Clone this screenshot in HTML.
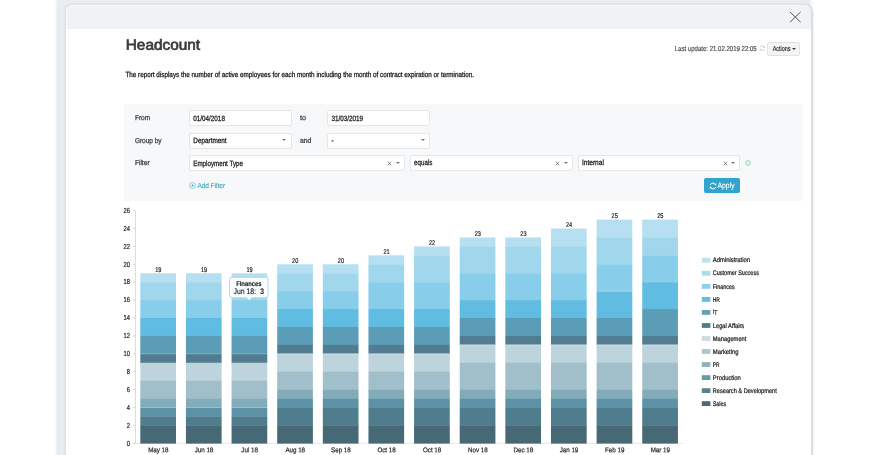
<!DOCTYPE html>
<html><head><meta charset="utf-8"><title>Headcount</title>
<style>
html,body{margin:0;padding:0;background:#fff;}
body{width:870px;height:455px;position:relative;overflow:hidden;font-family:"Liberation Sans",sans-serif;color:#222;}
.abs{position:absolute;white-space:nowrap;}
.modal{position:absolute;left:65.9px;top:4.7px;width:745.3px;height:470px;border-radius:6.5px;background:#fff;box-shadow:0 0 2.5px 0.5px #d9dde1,1.5px 0 1.5px 0 #d9dcde,-5px -14px 2.2px 5px #eaedef;overflow:hidden;}
.mhead{position:absolute;left:0;top:0;right:0;height:24.4px;background:#f0f3f6;box-shadow:inset 0.7px 0.7px 0 0 rgba(255,255,255,0.7);border-radius:6.5px 6.5px 0 0;}
.panel{position:absolute;left:123.5px;top:103.7px;width:679.7px;height:97.2px;background:#f6f8f9;}
.inp{position:absolute;border:1px solid #e4e7ea;border-radius:2px;background:#fff;box-sizing:content-box;}
.t{position:absolute;white-space:nowrap;line-height:1;transform-origin:0 50%;-webkit-text-stroke:0.3px currentColor;will-change:transform;}
.car{position:absolute;width:0;height:0;border-left:2px solid transparent;border-right:2px solid transparent;border-top:2.4px solid #777;}
</style></head><body>
<div class="modal"><div class="mhead"></div></div>
<svg class="abs" style="left:789px;top:11px" width="13" height="13" viewBox="0 0 13 13"><path d="M1 1L11.6 11.2M11.6 1L1 11.2" stroke="#555" stroke-width="1" fill="none"/></svg>
<svg class="abs" style="left:759.2px;top:44.7px" width="6.6" height="6.6" viewBox="0 0 8 8"><path d="M6.8 2.9A3 3 0 0 0 1.2 3.1M1.2 5.1A3 3 0 0 0 6.8 4.9" stroke="#9fd0bc" stroke-width="0.9" fill="none"/><path d="M7.6 1.4L6.9 3.6L4.9 2.6zM0.4 6.6L1.1 4.4L3.1 5.4z" fill="#9fd0bc"/></svg>
<div class="abs" style="left:767.3px;top:42px;width:31.2px;height:11.7px;border:1px solid #e0e3e5;border-radius:2px;background:#f3f4f5;"></div>
<div class="car" style="left:792.3px;top:48.2px;border-top-color:#333;"></div>
<div class="panel"></div>
<div class="inp" style="left:188.7px;top:110.4px;width:101.0px;height:13.9px;"></div>
<div class="inp" style="left:326.8px;top:110.4px;width:101.7px;height:13.9px;"></div>
<div class="inp" style="left:188.7px;top:132.9px;width:101.0px;height:14.1px;"></div>
<div class="inp" style="left:326.8px;top:132.9px;width:101.7px;height:14.1px;"></div>
<div class="car" style="left:281.9px;top:139.1px;border-top-color:#777;"></div>
<div class="car" style="left:420.8px;top:139.1px;border-top-color:#777;"></div>
<div class="inp" style="left:188.7px;top:155.3px;width:214.7px;height:14.1px;"></div>
<div class="inp" style="left:410.2px;top:155.3px;width:161.1px;height:14.1px;"></div>
<div class="inp" style="left:577.9px;top:155.3px;width:160.4px;height:14.1px;"></div>
<svg class="abs" style="left:387.2px;top:160.6px" width="5" height="5" viewBox="0 0 5 5"><path d="M0.8 0.8L4.2 4.2M4.2 0.8L0.8 4.2" stroke="#707070" stroke-width="0.8"/></svg><div class="car" style="left:395.6px;top:161.8px;border-top-color:#777;"></div>
<svg class="abs" style="left:555.2px;top:160.6px" width="5" height="5" viewBox="0 0 5 5"><path d="M0.8 0.8L4.2 4.2M4.2 0.8L0.8 4.2" stroke="#707070" stroke-width="0.8"/></svg><div class="car" style="left:563.8px;top:161.8px;border-top-color:#777;"></div>
<svg class="abs" style="left:722.5px;top:160.6px" width="5" height="5" viewBox="0 0 5 5"><path d="M0.8 0.8L4.2 4.2M4.2 0.8L0.8 4.2" stroke="#707070" stroke-width="0.8"/></svg><div class="car" style="left:731.2px;top:161.8px;border-top-color:#777;"></div>
<svg class="abs" style="left:745.3px;top:160px" width="6" height="6" viewBox="0 0 6 6"><circle cx="3" cy="3" r="2.4" fill="#dcf3ea" stroke="#93d2bb" stroke-width="0.9"/></svg>
<svg class="abs" style="left:188.7px;top:182.2px" width="7" height="7" viewBox="0 0 7 7"><circle cx="3.5" cy="3.5" r="2.9" fill="none" stroke="#4badc4" stroke-width="0.6"/><path d="M3.5 2v3M2 3.5h3" stroke="#4badc4" stroke-width="0.6"/></svg>
<div class="abs" style="left:703.6px;top:178.2px;width:36.6px;height:14.6px;border-radius:2px;background:#2fa4cd;"></div>
<svg class="abs" style="left:708.7px;top:181.5px" width="8" height="8" viewBox="0 0 8 8"><path d="M6.8 2.9A3 3 0 0 0 1.2 3.1M1.2 5.1A3 3 0 0 0 6.8 4.9" stroke="#fff" stroke-width="1.0" fill="none"/><path d="M7.6 1.4L6.9 3.6L4.9 2.6zM0.4 6.6L1.1 4.4L3.1 5.4z" fill="#fff"/></svg>
<svg width="870" height="455" viewBox="0 0 870 455" style="position:absolute;left:0;top:0;will-change:transform" stroke="#1e1e1e" stroke-width="0.12" font-family="'Liberation Sans', sans-serif">
<path d="M135.4 210.5V443.3" fill="none" stroke="#dcd9d9" stroke-width="1"/>
<path d="M133 443.3H684" fill="none" stroke="#e6e6e6" stroke-width="1"/>
<path d="M133 443.3H135.4" stroke="#cfcfcf" stroke-width="0.8"/>
<text transform="translate(130 445.6) rotate(0.03) scale(0.8 1)" font-size="7.2" stroke-width="0.22" text-anchor="end" fill="#1e1e1e">0</text>
<path d="M133 425.4H135.4" stroke="#cfcfcf" stroke-width="0.8"/>
<text transform="translate(130 427.7) rotate(0.03) scale(0.8 1)" font-size="7.2" stroke-width="0.22" text-anchor="end" fill="#1e1e1e">2</text>
<path d="M133 407.5H135.4" stroke="#cfcfcf" stroke-width="0.8"/>
<text transform="translate(130 409.8) rotate(0.03) scale(0.8 1)" font-size="7.2" stroke-width="0.22" text-anchor="end" fill="#1e1e1e">4</text>
<path d="M133 389.6H135.4" stroke="#cfcfcf" stroke-width="0.8"/>
<text transform="translate(130 391.9) rotate(0.03) scale(0.8 1)" font-size="7.2" stroke-width="0.22" text-anchor="end" fill="#1e1e1e">6</text>
<path d="M133 371.7H135.4" stroke="#cfcfcf" stroke-width="0.8"/>
<text transform="translate(130 374.0) rotate(0.03) scale(0.8 1)" font-size="7.2" stroke-width="0.22" text-anchor="end" fill="#1e1e1e">8</text>
<path d="M133 353.8H135.4" stroke="#cfcfcf" stroke-width="0.8"/>
<text transform="translate(130 356.1) rotate(0.03) scale(0.8 1)" font-size="7.2" stroke-width="0.22" text-anchor="end" fill="#1e1e1e">10</text>
<path d="M133 335.9H135.4" stroke="#cfcfcf" stroke-width="0.8"/>
<text transform="translate(130 338.2) rotate(0.03) scale(0.8 1)" font-size="7.2" stroke-width="0.22" text-anchor="end" fill="#1e1e1e">12</text>
<path d="M133 318.0H135.4" stroke="#cfcfcf" stroke-width="0.8"/>
<text transform="translate(130 320.3) rotate(0.03) scale(0.8 1)" font-size="7.2" stroke-width="0.22" text-anchor="end" fill="#1e1e1e">14</text>
<path d="M133 300.1H135.4" stroke="#cfcfcf" stroke-width="0.8"/>
<text transform="translate(130 302.4) rotate(0.03) scale(0.8 1)" font-size="7.2" stroke-width="0.22" text-anchor="end" fill="#1e1e1e">16</text>
<path d="M133 282.2H135.4" stroke="#cfcfcf" stroke-width="0.8"/>
<text transform="translate(130 284.5) rotate(0.03) scale(0.8 1)" font-size="7.2" stroke-width="0.22" text-anchor="end" fill="#1e1e1e">18</text>
<path d="M133 264.3H135.4" stroke="#cfcfcf" stroke-width="0.8"/>
<text transform="translate(130 266.6) rotate(0.03) scale(0.8 1)" font-size="7.2" stroke-width="0.22" text-anchor="end" fill="#1e1e1e">20</text>
<path d="M133 246.4H135.4" stroke="#cfcfcf" stroke-width="0.8"/>
<text transform="translate(130 248.7) rotate(0.03) scale(0.8 1)" font-size="7.2" stroke-width="0.22" text-anchor="end" fill="#1e1e1e">22</text>
<path d="M133 228.5H135.4" stroke="#cfcfcf" stroke-width="0.8"/>
<text transform="translate(130 230.8) rotate(0.03) scale(0.8 1)" font-size="7.2" stroke-width="0.22" text-anchor="end" fill="#1e1e1e">24</text>
<path d="M133 210.6H135.4" stroke="#cfcfcf" stroke-width="0.8"/>
<text transform="translate(130 212.9) rotate(0.03) scale(0.8 1)" font-size="7.2" stroke-width="0.22" text-anchor="end" fill="#1e1e1e">26</text>
<rect x="140.30" y="273.25" width="35.7" height="9.25" fill="#b6e0f1" stroke="none"/>
<rect x="140.30" y="282.20" width="35.7" height="18.20" fill="#a0d7ec" stroke="none"/>
<rect x="140.30" y="300.10" width="35.7" height="18.20" fill="#88cde9" stroke="none"/>
<rect x="140.30" y="318.00" width="35.7" height="18.20" fill="#61bce1" stroke="none"/>
<rect x="140.30" y="335.90" width="35.7" height="18.20" fill="#5b9db6" stroke="none"/>
<rect x="140.30" y="353.80" width="35.7" height="9.25" fill="#507d91" stroke="none"/>
<rect x="140.30" y="362.75" width="35.7" height="18.20" fill="#bed4dc" stroke="none"/>
<rect x="140.30" y="380.65" width="35.7" height="18.20" fill="#a0bfca" stroke="none"/>
<rect x="140.30" y="398.55" width="35.7" height="9.25" fill="#83acbb" stroke="none"/>
<rect x="140.30" y="407.50" width="35.7" height="9.25" fill="#5d92a6" stroke="none"/>
<rect x="140.30" y="416.45" width="35.7" height="9.25" fill="#4f7d8d" stroke="none"/>
<rect x="140.30" y="425.40" width="35.7" height="18.20" fill="#476976" stroke="none"/>
<rect x="140.30" y="353.35" width="35.7" height="0.9" fill="#fff" fill-opacity="0.3" stroke="none"/>
<rect x="140.30" y="407.05" width="35.7" height="0.9" fill="#fff" fill-opacity="0.3" stroke="none"/>
<text transform="translate(158.3 271.8) rotate(0.03) scale(0.8 1)" font-size="7" stroke-width="0.2" text-anchor="middle" fill="#1e1e1e">19</text>
<text transform="translate(158.3 452.3) rotate(0.03) scale(0.9 1)" font-size="6.9" stroke-width="0.2" text-anchor="middle" fill="#1e1e1e">May 18</text>
<rect x="185.93" y="273.25" width="35.7" height="9.25" fill="#b6e0f1" stroke="none"/>
<rect x="185.93" y="282.20" width="35.7" height="18.20" fill="#a0d7ec" stroke="none"/>
<rect x="185.93" y="300.10" width="35.7" height="18.20" fill="#88cde9" stroke="none"/>
<rect x="185.93" y="318.00" width="35.7" height="18.20" fill="#61bce1" stroke="none"/>
<rect x="185.93" y="335.90" width="35.7" height="18.20" fill="#5b9db6" stroke="none"/>
<rect x="185.93" y="353.80" width="35.7" height="9.25" fill="#507d91" stroke="none"/>
<rect x="185.93" y="362.75" width="35.7" height="18.20" fill="#bed4dc" stroke="none"/>
<rect x="185.93" y="380.65" width="35.7" height="18.20" fill="#a0bfca" stroke="none"/>
<rect x="185.93" y="398.55" width="35.7" height="9.25" fill="#83acbb" stroke="none"/>
<rect x="185.93" y="407.50" width="35.7" height="9.25" fill="#5d92a6" stroke="none"/>
<rect x="185.93" y="416.45" width="35.7" height="9.25" fill="#4f7d8d" stroke="none"/>
<rect x="185.93" y="425.40" width="35.7" height="18.20" fill="#476976" stroke="none"/>
<rect x="185.93" y="353.35" width="35.7" height="0.9" fill="#fff" fill-opacity="0.3" stroke="none"/>
<rect x="185.93" y="407.05" width="35.7" height="0.9" fill="#fff" fill-opacity="0.3" stroke="none"/>
<text transform="translate(204.0 271.8) rotate(0.03) scale(0.8 1)" font-size="7" stroke-width="0.2" text-anchor="middle" fill="#1e1e1e">19</text>
<text transform="translate(204.0 452.3) rotate(0.03) scale(0.9 1)" font-size="6.9" stroke-width="0.2" text-anchor="middle" fill="#1e1e1e">Jun 18</text>
<rect x="231.56" y="273.25" width="35.7" height="9.25" fill="#b6e0f1" stroke="none"/>
<rect x="231.56" y="282.20" width="35.7" height="18.20" fill="#a0d7ec" stroke="none"/>
<rect x="231.56" y="300.10" width="35.7" height="18.20" fill="#88cde9" stroke="none"/>
<rect x="231.56" y="318.00" width="35.7" height="18.20" fill="#61bce1" stroke="none"/>
<rect x="231.56" y="335.90" width="35.7" height="18.20" fill="#5b9db6" stroke="none"/>
<rect x="231.56" y="353.80" width="35.7" height="9.25" fill="#507d91" stroke="none"/>
<rect x="231.56" y="362.75" width="35.7" height="18.20" fill="#bed4dc" stroke="none"/>
<rect x="231.56" y="380.65" width="35.7" height="18.20" fill="#a0bfca" stroke="none"/>
<rect x="231.56" y="398.55" width="35.7" height="9.25" fill="#83acbb" stroke="none"/>
<rect x="231.56" y="407.50" width="35.7" height="9.25" fill="#5d92a6" stroke="none"/>
<rect x="231.56" y="416.45" width="35.7" height="9.25" fill="#4f7d8d" stroke="none"/>
<rect x="231.56" y="425.40" width="35.7" height="18.20" fill="#476976" stroke="none"/>
<rect x="231.56" y="353.35" width="35.7" height="0.9" fill="#fff" fill-opacity="0.3" stroke="none"/>
<rect x="231.56" y="407.05" width="35.7" height="0.9" fill="#fff" fill-opacity="0.3" stroke="none"/>
<text transform="translate(249.6 271.8) rotate(0.03) scale(0.8 1)" font-size="7" stroke-width="0.2" text-anchor="middle" fill="#1e1e1e">19</text>
<text transform="translate(249.6 452.3) rotate(0.03) scale(0.9 1)" font-size="6.9" stroke-width="0.2" text-anchor="middle" fill="#1e1e1e">Jul 18</text>
<rect x="277.19" y="264.30" width="35.7" height="9.25" fill="#b6e0f1" stroke="none"/>
<rect x="277.19" y="273.25" width="35.7" height="18.20" fill="#a0d7ec" stroke="none"/>
<rect x="277.19" y="291.15" width="35.7" height="18.20" fill="#88cde9" stroke="none"/>
<rect x="277.19" y="309.05" width="35.7" height="18.20" fill="#61bce1" stroke="none"/>
<rect x="277.19" y="326.95" width="35.7" height="18.20" fill="#5b9db6" stroke="none"/>
<rect x="277.19" y="344.85" width="35.7" height="9.25" fill="#507d91" stroke="none"/>
<rect x="277.19" y="353.80" width="35.7" height="18.20" fill="#bed4dc" stroke="none"/>
<rect x="277.19" y="371.70" width="35.7" height="18.20" fill="#a0bfca" stroke="none"/>
<rect x="277.19" y="389.60" width="35.7" height="9.25" fill="#83acbb" stroke="none"/>
<rect x="277.19" y="398.55" width="35.7" height="9.25" fill="#5d92a6" stroke="none"/>
<rect x="277.19" y="407.50" width="35.7" height="18.20" fill="#4f7d8d" stroke="none"/>
<rect x="277.19" y="425.40" width="35.7" height="18.20" fill="#476976" stroke="none"/>
<rect x="277.19" y="353.35" width="35.7" height="0.9" fill="#fff" fill-opacity="0.5" stroke="none"/>
<text transform="translate(295.2 262.8) rotate(0.03) scale(0.8 1)" font-size="7" stroke-width="0.2" text-anchor="middle" fill="#1e1e1e">20</text>
<text transform="translate(295.2 452.3) rotate(0.03) scale(0.9 1)" font-size="6.9" stroke-width="0.2" text-anchor="middle" fill="#1e1e1e">Aug 18</text>
<rect x="322.82" y="264.30" width="35.7" height="9.25" fill="#b6e0f1" stroke="none"/>
<rect x="322.82" y="273.25" width="35.7" height="18.20" fill="#a0d7ec" stroke="none"/>
<rect x="322.82" y="291.15" width="35.7" height="18.20" fill="#88cde9" stroke="none"/>
<rect x="322.82" y="309.05" width="35.7" height="18.20" fill="#61bce1" stroke="none"/>
<rect x="322.82" y="326.95" width="35.7" height="18.20" fill="#5b9db6" stroke="none"/>
<rect x="322.82" y="344.85" width="35.7" height="9.25" fill="#507d91" stroke="none"/>
<rect x="322.82" y="353.80" width="35.7" height="18.20" fill="#bed4dc" stroke="none"/>
<rect x="322.82" y="371.70" width="35.7" height="18.20" fill="#a0bfca" stroke="none"/>
<rect x="322.82" y="389.60" width="35.7" height="9.25" fill="#83acbb" stroke="none"/>
<rect x="322.82" y="398.55" width="35.7" height="9.25" fill="#5d92a6" stroke="none"/>
<rect x="322.82" y="407.50" width="35.7" height="18.20" fill="#4f7d8d" stroke="none"/>
<rect x="322.82" y="425.40" width="35.7" height="18.20" fill="#476976" stroke="none"/>
<rect x="322.82" y="353.35" width="35.7" height="0.9" fill="#fff" fill-opacity="0.5" stroke="none"/>
<text transform="translate(340.9 262.8) rotate(0.03) scale(0.8 1)" font-size="7" stroke-width="0.2" text-anchor="middle" fill="#1e1e1e">20</text>
<text transform="translate(340.9 452.3) rotate(0.03) scale(0.9 1)" font-size="6.9" stroke-width="0.2" text-anchor="middle" fill="#1e1e1e">Sep 18</text>
<rect x="368.45" y="255.35" width="35.7" height="9.25" fill="#b6e0f1" stroke="none"/>
<rect x="368.45" y="264.30" width="35.7" height="18.20" fill="#a0d7ec" stroke="none"/>
<rect x="368.45" y="282.20" width="35.7" height="27.15" fill="#88cde9" stroke="none"/>
<rect x="368.45" y="309.05" width="35.7" height="18.20" fill="#61bce1" stroke="none"/>
<rect x="368.45" y="326.95" width="35.7" height="18.20" fill="#5b9db6" stroke="none"/>
<rect x="368.45" y="344.85" width="35.7" height="9.25" fill="#507d91" stroke="none"/>
<rect x="368.45" y="353.80" width="35.7" height="18.20" fill="#bed4dc" stroke="none"/>
<rect x="368.45" y="371.70" width="35.7" height="18.20" fill="#a0bfca" stroke="none"/>
<rect x="368.45" y="389.60" width="35.7" height="9.25" fill="#83acbb" stroke="none"/>
<rect x="368.45" y="398.55" width="35.7" height="9.25" fill="#5d92a6" stroke="none"/>
<rect x="368.45" y="407.50" width="35.7" height="18.20" fill="#4f7d8d" stroke="none"/>
<rect x="368.45" y="425.40" width="35.7" height="18.20" fill="#476976" stroke="none"/>
<rect x="368.45" y="353.35" width="35.7" height="0.9" fill="#fff" fill-opacity="0.5" stroke="none"/>
<text transform="translate(386.5 253.9) rotate(0.03) scale(0.8 1)" font-size="7" stroke-width="0.2" text-anchor="middle" fill="#1e1e1e">21</text>
<text transform="translate(386.5 452.3) rotate(0.03) scale(0.9 1)" font-size="6.9" stroke-width="0.2" text-anchor="middle" fill="#1e1e1e">Oct 18</text>
<rect x="414.08" y="246.40" width="35.7" height="9.25" fill="#b6e0f1" stroke="none"/>
<rect x="414.08" y="255.35" width="35.7" height="27.15" fill="#a0d7ec" stroke="none"/>
<rect x="414.08" y="282.20" width="35.7" height="27.15" fill="#88cde9" stroke="none"/>
<rect x="414.08" y="309.05" width="35.7" height="18.20" fill="#61bce1" stroke="none"/>
<rect x="414.08" y="326.95" width="35.7" height="18.20" fill="#5b9db6" stroke="none"/>
<rect x="414.08" y="344.85" width="35.7" height="9.25" fill="#507d91" stroke="none"/>
<rect x="414.08" y="353.80" width="35.7" height="18.20" fill="#bed4dc" stroke="none"/>
<rect x="414.08" y="371.70" width="35.7" height="18.20" fill="#a0bfca" stroke="none"/>
<rect x="414.08" y="389.60" width="35.7" height="9.25" fill="#83acbb" stroke="none"/>
<rect x="414.08" y="398.55" width="35.7" height="9.25" fill="#5d92a6" stroke="none"/>
<rect x="414.08" y="407.50" width="35.7" height="18.20" fill="#4f7d8d" stroke="none"/>
<rect x="414.08" y="425.40" width="35.7" height="18.20" fill="#476976" stroke="none"/>
<rect x="414.08" y="353.35" width="35.7" height="0.9" fill="#fff" fill-opacity="0.5" stroke="none"/>
<text transform="translate(432.1 244.9) rotate(0.03) scale(0.8 1)" font-size="7" stroke-width="0.2" text-anchor="middle" fill="#1e1e1e">22</text>
<text transform="translate(432.1 452.3) rotate(0.03) scale(0.9 1)" font-size="6.9" stroke-width="0.2" text-anchor="middle" fill="#1e1e1e">Oct 18</text>
<rect x="459.71" y="237.45" width="35.7" height="9.25" fill="#b6e0f1" stroke="none"/>
<rect x="459.71" y="246.40" width="35.7" height="27.15" fill="#a0d7ec" stroke="none"/>
<rect x="459.71" y="273.25" width="35.7" height="27.15" fill="#88cde9" stroke="none"/>
<rect x="459.71" y="300.10" width="35.7" height="18.20" fill="#61bce1" stroke="none"/>
<rect x="459.71" y="318.00" width="35.7" height="18.20" fill="#5b9db6" stroke="none"/>
<rect x="459.71" y="335.90" width="35.7" height="9.25" fill="#507d91" stroke="none"/>
<rect x="459.71" y="344.85" width="35.7" height="18.20" fill="#bed4dc" stroke="none"/>
<rect x="459.71" y="362.75" width="35.7" height="27.15" fill="#a0bfca" stroke="none"/>
<rect x="459.71" y="389.60" width="35.7" height="9.25" fill="#83acbb" stroke="none"/>
<rect x="459.71" y="398.55" width="35.7" height="9.25" fill="#5d92a6" stroke="none"/>
<rect x="459.71" y="407.50" width="35.7" height="18.20" fill="#4f7d8d" stroke="none"/>
<rect x="459.71" y="425.40" width="35.7" height="18.20" fill="#476976" stroke="none"/>
<rect x="459.71" y="344.40" width="35.7" height="0.9" fill="#fff" fill-opacity="0.5" stroke="none"/>
<text transform="translate(477.8 236.0) rotate(0.03) scale(0.8 1)" font-size="7" stroke-width="0.2" text-anchor="middle" fill="#1e1e1e">23</text>
<text transform="translate(477.8 452.3) rotate(0.03) scale(0.9 1)" font-size="6.9" stroke-width="0.2" text-anchor="middle" fill="#1e1e1e">Nov 18</text>
<rect x="505.34" y="237.45" width="35.7" height="9.25" fill="#b6e0f1" stroke="none"/>
<rect x="505.34" y="246.40" width="35.7" height="27.15" fill="#a0d7ec" stroke="none"/>
<rect x="505.34" y="273.25" width="35.7" height="27.15" fill="#88cde9" stroke="none"/>
<rect x="505.34" y="300.10" width="35.7" height="18.20" fill="#61bce1" stroke="none"/>
<rect x="505.34" y="318.00" width="35.7" height="18.20" fill="#5b9db6" stroke="none"/>
<rect x="505.34" y="335.90" width="35.7" height="9.25" fill="#507d91" stroke="none"/>
<rect x="505.34" y="344.85" width="35.7" height="18.20" fill="#bed4dc" stroke="none"/>
<rect x="505.34" y="362.75" width="35.7" height="27.15" fill="#a0bfca" stroke="none"/>
<rect x="505.34" y="389.60" width="35.7" height="9.25" fill="#83acbb" stroke="none"/>
<rect x="505.34" y="398.55" width="35.7" height="9.25" fill="#5d92a6" stroke="none"/>
<rect x="505.34" y="407.50" width="35.7" height="18.20" fill="#4f7d8d" stroke="none"/>
<rect x="505.34" y="425.40" width="35.7" height="18.20" fill="#476976" stroke="none"/>
<rect x="505.34" y="344.40" width="35.7" height="0.9" fill="#fff" fill-opacity="0.5" stroke="none"/>
<text transform="translate(523.4 236.0) rotate(0.03) scale(0.8 1)" font-size="7" stroke-width="0.2" text-anchor="middle" fill="#1e1e1e">23</text>
<text transform="translate(523.4 452.3) rotate(0.03) scale(0.9 1)" font-size="6.9" stroke-width="0.2" text-anchor="middle" fill="#1e1e1e">Dec 18</text>
<rect x="550.97" y="228.50" width="35.7" height="18.20" fill="#b6e0f1" stroke="none"/>
<rect x="550.97" y="246.40" width="35.7" height="27.15" fill="#a0d7ec" stroke="none"/>
<rect x="550.97" y="273.25" width="35.7" height="27.15" fill="#88cde9" stroke="none"/>
<rect x="550.97" y="300.10" width="35.7" height="18.20" fill="#61bce1" stroke="none"/>
<rect x="550.97" y="318.00" width="35.7" height="18.20" fill="#5b9db6" stroke="none"/>
<rect x="550.97" y="335.90" width="35.7" height="9.25" fill="#507d91" stroke="none"/>
<rect x="550.97" y="344.85" width="35.7" height="18.20" fill="#bed4dc" stroke="none"/>
<rect x="550.97" y="362.75" width="35.7" height="27.15" fill="#a0bfca" stroke="none"/>
<rect x="550.97" y="389.60" width="35.7" height="9.25" fill="#83acbb" stroke="none"/>
<rect x="550.97" y="398.55" width="35.7" height="9.25" fill="#5d92a6" stroke="none"/>
<rect x="550.97" y="407.50" width="35.7" height="18.20" fill="#4f7d8d" stroke="none"/>
<rect x="550.97" y="425.40" width="35.7" height="18.20" fill="#476976" stroke="none"/>
<rect x="550.97" y="344.40" width="35.7" height="0.9" fill="#fff" fill-opacity="0.5" stroke="none"/>
<text transform="translate(569.0 227.0) rotate(0.03) scale(0.8 1)" font-size="7" stroke-width="0.2" text-anchor="middle" fill="#1e1e1e">24</text>
<text transform="translate(569.0 452.3) rotate(0.03) scale(0.9 1)" font-size="6.9" stroke-width="0.2" text-anchor="middle" fill="#1e1e1e">Jan 19</text>
<rect x="596.60" y="219.55" width="35.7" height="18.20" fill="#b6e0f1" stroke="none"/>
<rect x="596.60" y="237.45" width="35.7" height="27.15" fill="#a0d7ec" stroke="none"/>
<rect x="596.60" y="264.30" width="35.7" height="27.15" fill="#88cde9" stroke="none"/>
<rect x="596.60" y="291.15" width="35.7" height="27.15" fill="#61bce1" stroke="none"/>
<rect x="596.60" y="318.00" width="35.7" height="18.20" fill="#5b9db6" stroke="none"/>
<rect x="596.60" y="335.90" width="35.7" height="9.25" fill="#507d91" stroke="none"/>
<rect x="596.60" y="344.85" width="35.7" height="18.20" fill="#bed4dc" stroke="none"/>
<rect x="596.60" y="362.75" width="35.7" height="27.15" fill="#a0bfca" stroke="none"/>
<rect x="596.60" y="389.60" width="35.7" height="9.25" fill="#83acbb" stroke="none"/>
<rect x="596.60" y="398.55" width="35.7" height="9.25" fill="#5d92a6" stroke="none"/>
<rect x="596.60" y="407.50" width="35.7" height="18.20" fill="#4f7d8d" stroke="none"/>
<rect x="596.60" y="425.40" width="35.7" height="18.20" fill="#476976" stroke="none"/>
<rect x="596.60" y="344.40" width="35.7" height="0.9" fill="#fff" fill-opacity="0.5" stroke="none"/>
<rect x="596.60" y="290.70" width="35.7" height="0.9" fill="#fff" fill-opacity="0.3" stroke="none"/>
<text transform="translate(614.7 218.1) rotate(0.03) scale(0.8 1)" font-size="7" stroke-width="0.2" text-anchor="middle" fill="#1e1e1e">25</text>
<text transform="translate(614.7 452.3) rotate(0.03) scale(0.9 1)" font-size="6.9" stroke-width="0.2" text-anchor="middle" fill="#1e1e1e">Feb 19</text>
<rect x="642.23" y="219.55" width="35.7" height="18.20" fill="#b6e0f1" stroke="none"/>
<rect x="642.23" y="237.45" width="35.7" height="18.20" fill="#a0d7ec" stroke="none"/>
<rect x="642.23" y="255.35" width="35.7" height="27.15" fill="#88cde9" stroke="none"/>
<rect x="642.23" y="282.20" width="35.7" height="27.15" fill="#61bce1" stroke="none"/>
<rect x="642.23" y="309.05" width="35.7" height="27.15" fill="#5b9db6" stroke="none"/>
<rect x="642.23" y="335.90" width="35.7" height="9.25" fill="#507d91" stroke="none"/>
<rect x="642.23" y="344.85" width="35.7" height="18.20" fill="#bed4dc" stroke="none"/>
<rect x="642.23" y="362.75" width="35.7" height="27.15" fill="#a0bfca" stroke="none"/>
<rect x="642.23" y="389.60" width="35.7" height="9.25" fill="#83acbb" stroke="none"/>
<rect x="642.23" y="398.55" width="35.7" height="9.25" fill="#5d92a6" stroke="none"/>
<rect x="642.23" y="407.50" width="35.7" height="18.20" fill="#4f7d8d" stroke="none"/>
<rect x="642.23" y="425.40" width="35.7" height="18.20" fill="#476976" stroke="none"/>
<rect x="642.23" y="344.40" width="35.7" height="0.9" fill="#fff" fill-opacity="0.5" stroke="none"/>
<text transform="translate(660.3 218.1) rotate(0.03) scale(0.8 1)" font-size="7" stroke-width="0.2" text-anchor="middle" fill="#1e1e1e">25</text>
<text transform="translate(660.3 452.3) rotate(0.03) scale(0.9 1)" font-size="6.9" stroke-width="0.2" text-anchor="middle" fill="#1e1e1e">Mar 19</text>
<rect x="701.8" y="257.9" width="8.6" height="4.8" fill="#c2e1f0" stroke="none"/>
<text x="712.8" y="262.4" transform="rotate(0.03 712.8 262.4)" font-size="6.7" stroke-width="0.24" textLength="37.3" lengthAdjust="spacingAndGlyphs" fill="#1e1e1e">Administration</text>
<rect x="701.8" y="270.9" width="8.6" height="4.8" fill="#a9dde9" stroke="none"/>
<text x="712.8" y="275.4" transform="rotate(0.03 712.8 275.4)" font-size="6.7" stroke-width="0.24" textLength="46.1" lengthAdjust="spacingAndGlyphs" fill="#1e1e1e">Customer Success</text>
<rect x="701.8" y="284.0" width="8.6" height="4.8" fill="#8fd0e6" stroke="none"/>
<text x="712.8" y="288.5" transform="rotate(0.03 712.8 288.5)" font-size="6.7" stroke-width="0.24" textLength="22.0" lengthAdjust="spacingAndGlyphs" fill="#1e1e1e">Finances</text>
<rect x="701.8" y="297.0" width="8.6" height="4.8" fill="#63bfe0" stroke="none"/>
<text x="712.8" y="301.5" transform="rotate(0.03 712.8 301.5)" font-size="6.7" stroke-width="0.24" textLength="7.1" lengthAdjust="spacingAndGlyphs" fill="#1e1e1e">HR</text>
<rect x="701.8" y="310.0" width="8.6" height="4.8" fill="#67a4b3" stroke="none"/>
<text x="712.8" y="314.5" transform="rotate(0.03 712.8 314.5)" font-size="6.7" stroke-width="0.24" textLength="4.5" lengthAdjust="spacingAndGlyphs" fill="#1e1e1e">IT</text>
<rect x="701.8" y="323.1" width="8.6" height="4.8" fill="#4f7d85" stroke="none"/>
<text x="712.8" y="327.6" transform="rotate(0.03 712.8 327.6)" font-size="6.7" stroke-width="0.24" textLength="31.4" lengthAdjust="spacingAndGlyphs" fill="#1e1e1e">Legal Affairs</text>
<rect x="701.8" y="336.1" width="8.6" height="4.8" fill="#cfdcde" stroke="none"/>
<text x="712.8" y="340.6" transform="rotate(0.03 712.8 340.6)" font-size="6.7" stroke-width="0.24" textLength="33.6" lengthAdjust="spacingAndGlyphs" fill="#1e1e1e">Management</text>
<rect x="701.8" y="349.1" width="8.6" height="4.8" fill="#b0c5cf" stroke="none"/>
<text x="712.8" y="353.6" transform="rotate(0.03 712.8 353.6)" font-size="6.7" stroke-width="0.24" textLength="25.8" lengthAdjust="spacingAndGlyphs" fill="#1e1e1e">Marketing</text>
<rect x="701.8" y="362.1" width="8.6" height="4.8" fill="#8db2ba" stroke="none"/>
<text x="712.8" y="366.6" transform="rotate(0.03 712.8 366.6)" font-size="6.7" stroke-width="0.24" textLength="6.7" lengthAdjust="spacingAndGlyphs" fill="#1e1e1e">PR</text>
<rect x="701.8" y="375.2" width="8.6" height="4.8" fill="#6799a4" stroke="none"/>
<text x="712.8" y="379.7" transform="rotate(0.03 712.8 379.7)" font-size="6.7" stroke-width="0.24" textLength="28.0" lengthAdjust="spacingAndGlyphs" fill="#1e1e1e">Production</text>
<rect x="701.8" y="388.2" width="8.6" height="4.8" fill="#5a848a" stroke="none"/>
<text x="712.8" y="392.7" transform="rotate(0.03 712.8 392.7)" font-size="6.7" stroke-width="0.24" textLength="63.9" lengthAdjust="spacingAndGlyphs" fill="#1e1e1e">Research &amp; Development</text>
<rect x="701.8" y="401.2" width="8.6" height="4.8" fill="#4a6c70" stroke="none"/>
<text x="712.8" y="405.7" transform="rotate(0.03 712.8 405.7)" font-size="6.7" stroke-width="0.24" textLength="13.4" lengthAdjust="spacingAndGlyphs" fill="#1e1e1e">Sales</text>
<path d="M231.9 277.3h33.8a2.4 2.4 0 0 1 2.4 2.4v15.7a2.4 2.4 0 0 1-2.4 2.4h-13.6l-2.9 2.6-2.9-2.6h-14.4a2.4 2.4 0 0 1-2.4-2.4v-15.7a2.4 2.4 0 0 1 2.4-2.4z" fill="#fff" fill-opacity="0.93" stroke="#a4d6e9" stroke-width="0.9"/>
<text x="236.2" y="285.8" transform="rotate(0.03 236 285)" font-size="6.9" font-weight="bold" stroke-width="0.15" textLength="25.3" lengthAdjust="spacingAndGlyphs" fill="#1e1e1e">Finances</text>
<text x="233.5" y="293.7" transform="rotate(0.03 233 293)" font-size="8.1" stroke-width="0.15" textLength="22.6" lengthAdjust="spacingAndGlyphs" fill="#1e1e1e">Jun 18:</text>
<text x="259.9" y="293.7" transform="rotate(0.03 260 293)" font-size="8.1" font-weight="bold" stroke="none" textLength="4.1" lengthAdjust="spacingAndGlyphs" fill="#1e1e1e">3</text>
<text id="title" x="125.8" y="49.8" transform="rotate(0.03 125.8 49.8)" font-size="14.8" font-weight="normal" fill="#3a3a3a" stroke="#3a3a3a" stroke-width="0.7" textLength="74.2" lengthAdjust="spacingAndGlyphs">Headcount</text>
<text id="desc" x="125.4" y="77.2" transform="rotate(0.03 125.4 77.2)" font-size="7.5" font-weight="normal" fill="#1e1e1e" stroke="#1e1e1e" stroke-width="0.3" textLength="348.6" lengthAdjust="spacingAndGlyphs">The report displays the number of active employees for each month including the month of contract expiration or termination.</text>
<text id="upd" x="674.7" y="51.3" transform="rotate(0.03 674.7 51.3)" font-size="7.2" font-weight="normal" fill="#444" stroke="#444" stroke-width="0.15" textLength="82.0" lengthAdjust="spacingAndGlyphs">Last update: 21.02.2019 22:05</text>
<text id="act" x="772.7" y="51.3" transform="rotate(0.03 772.7 51.3)" font-size="7.2" font-weight="normal" fill="#222" stroke="#222" stroke-width="0.15" textLength="17.8" lengthAdjust="spacingAndGlyphs">Actions</text>
<text id="l1" x="134.9" y="120.0" transform="rotate(0.03 134.9 120.0)" font-size="7.1" font-weight="normal" fill="#444" stroke="#444" stroke-width="0.3" textLength="15.3" lengthAdjust="spacingAndGlyphs">From</text>
<text id="v1" x="193.3" y="120.5" transform="rotate(0.03 193.3 120.5)" font-size="7.7" font-weight="normal" fill="#1e1e1e" stroke="#1e1e1e" stroke-width="0.3" textLength="31.6" lengthAdjust="spacingAndGlyphs">01/04/2018</text>
<text id="l1b" x="299.9" y="120.0" transform="rotate(0.03 299.9 120.0)" font-size="7.1" font-weight="normal" fill="#444" stroke="#444" stroke-width="0.3" textLength="6.0" lengthAdjust="spacingAndGlyphs">to</text>
<text id="v1b" x="331.4" y="120.5" transform="rotate(0.03 331.4 120.5)" font-size="7.7" font-weight="normal" fill="#1e1e1e" stroke="#1e1e1e" stroke-width="0.3" textLength="31.6" lengthAdjust="spacingAndGlyphs">31/03/2019</text>
<text id="l2" x="134.9" y="142.8" transform="rotate(0.03 134.9 142.8)" font-size="7.1" font-weight="normal" fill="#444" stroke="#444" stroke-width="0.3" textLength="26.7" lengthAdjust="spacingAndGlyphs">Group by</text>
<text id="v2" x="193.3" y="143.1" transform="rotate(0.03 193.3 143.1)" font-size="7.7" font-weight="normal" fill="#1e1e1e" stroke="#1e1e1e" stroke-width="0.3" textLength="33.3" lengthAdjust="spacingAndGlyphs">Department</text>
<text id="l2b" x="299.9" y="142.8" transform="rotate(0.03 299.9 142.8)" font-size="7.1" font-weight="normal" fill="#444" stroke="#444" stroke-width="0.3" textLength="11.4" lengthAdjust="spacingAndGlyphs">and</text>
<text id="v2b" x="331.4" y="142.6" transform="rotate(0.03 331.4 142.6)" font-size="8" font-weight="normal" fill="#1e1e1e" stroke="#1e1e1e" stroke-width="0.3" textLength="2.1" lengthAdjust="spacingAndGlyphs">-</text>
<text id="l3" x="134.9" y="164.9" transform="rotate(0.03 134.9 164.9)" font-size="7.1" font-weight="normal" fill="#444" stroke="#444" stroke-width="0.3" textLength="14.7" lengthAdjust="spacingAndGlyphs">Filter</text>
<text id="v3" x="193.3" y="165.6" transform="rotate(0.03 193.3 165.6)" font-size="7.7" font-weight="normal" fill="#1e1e1e" stroke="#1e1e1e" stroke-width="0.3" textLength="49.6" lengthAdjust="spacingAndGlyphs">Employment Type</text>
<text id="v3b" x="414.1" y="165.2" transform="rotate(0.03 414.1 165.2)" font-size="7.7" font-weight="normal" fill="#1e1e1e" stroke="#1e1e1e" stroke-width="0.3" textLength="18.3" lengthAdjust="spacingAndGlyphs">equals</text>
<text id="v3c" x="581.9" y="165.2" transform="rotate(0.03 581.9 165.2)" font-size="7.7" font-weight="normal" fill="#1e1e1e" stroke="#1e1e1e" stroke-width="0.3" textLength="22.0" lengthAdjust="spacingAndGlyphs">Internal</text>
<text id="addf" x="197.4" y="187.8" transform="rotate(0.03 197.4 187.8)" font-size="7.3" font-weight="normal" fill="#3ba5be" stroke="#3ba5be" stroke-width="0.12" textLength="27.7" lengthAdjust="spacingAndGlyphs">Add Filter</text>
<text id="apply" x="717.5" y="188.4" transform="rotate(0.03 717.5 188.4)" font-size="8" font-weight="normal" fill="#fff" stroke="#fff" stroke-width="0.1" textLength="17.1" lengthAdjust="spacingAndGlyphs">Apply</text>
</svg>
</body></html>
